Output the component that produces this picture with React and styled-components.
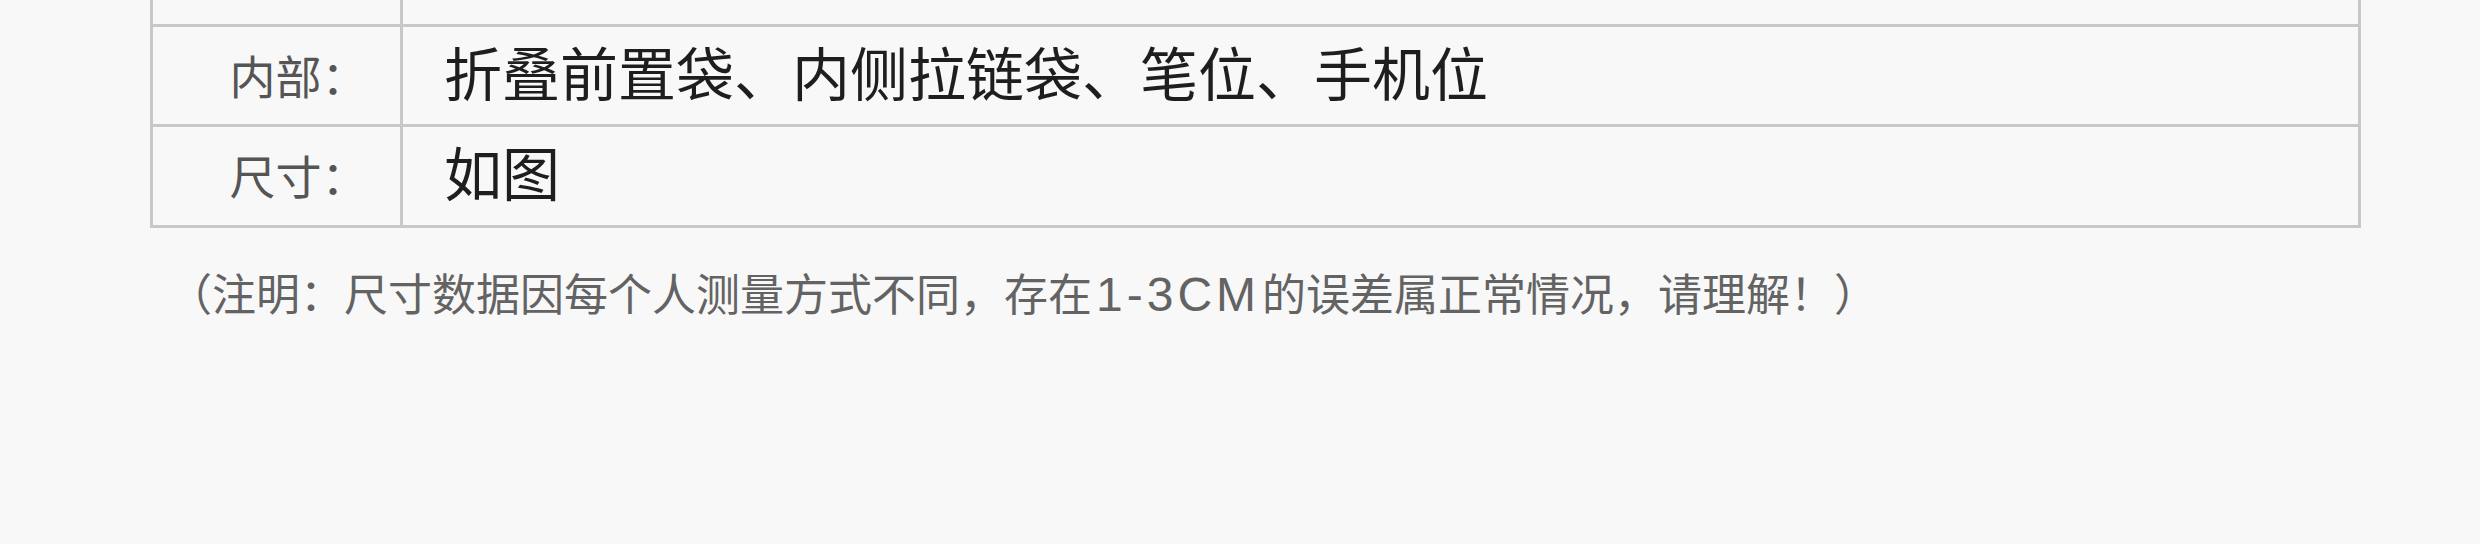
import React from "react";
import styled, { createGlobalStyle } from "styled-components";

const GlobalStyle = createGlobalStyle`
  html, body {
    margin: 0;
    padding: 0;
    background: #f8f8f8;
  }
  body {
    font-family: "Noto Sans CJK SC", "Noto Sans", sans-serif;
  }
`;

const Page = styled.div`
  width: 2480px;
  height: 544px;
  background: #f8f8f8;
  padding-left: 150px;
  box-sizing: border-box;
  overflow: hidden;
`;

const Table = styled.div`
  width: 2211px;
  border-left: 3px solid #c8c8c8;
  border-right: 3px solid #c8c8c8;
  border-bottom: 3px solid #c8c8c8;
  box-sizing: border-box;
`;

const Row = styled.div`
  display: grid;
  grid-template-columns: 250px 1fr;
  height: ${(p) => p.$h}px;
  border-top: ${(p) => (p.$first ? "none" : "3px solid #c8c8c8")};
`;

const LabelCell = styled.div`
  display: flex;
  align-items: center;
  justify-content: center;
  padding-left: 44px;
  padding-bottom: 4px;
  border-right: 3px solid #c8c8c8;
  font-size: 46px;
  line-height: 1;
  color: #555;
  box-sizing: border-box;
`;

const ValueCell = styled.div`
  display: flex;
  align-items: center;
  padding-left: 41px;
  padding-bottom: 10px;
  font-size: 58px;
  line-height: 1;
  color: #1e1e1e;
  box-sizing: border-box;
`;

const Note = styled.div`
  margin-top: 42px;
  margin-left: 18px;
  font-size: 44px;
  line-height: 1;
  color: #636363;
  white-space: nowrap;
`;

const Latin = styled.span`
  font-family: "Liberation Sans", Arial, sans-serif;
  font-size: 48px;
  letter-spacing: 4px;
  margin: 0 2px 0 4px;
`;

const rows = [
  { label: "", value: "", h: 24, first: true },
  { label: "内部：", value: "折叠前置袋、内侧拉链袋、笔位、手机位", h: 97 },
  { label: "尺寸：", value: "如图", h: 98 },
];

export default function App() {
  return (
    <>
      <GlobalStyle />
      <Page>
        <Table>
          {rows.map((r, i) => (
            <Row key={i} $h={r.h} $first={r.first}>
              <LabelCell>{r.label}</LabelCell>
              <ValueCell>{r.value}</ValueCell>
            </Row>
          ))}
        </Table>
        <Note>
          （注明：尺寸数据因每个人测量方式不同，存在<Latin>1-3CM</Latin>的误差属正常情况，请理解！）
        </Note>
      </Page>
    </>
  );
}
